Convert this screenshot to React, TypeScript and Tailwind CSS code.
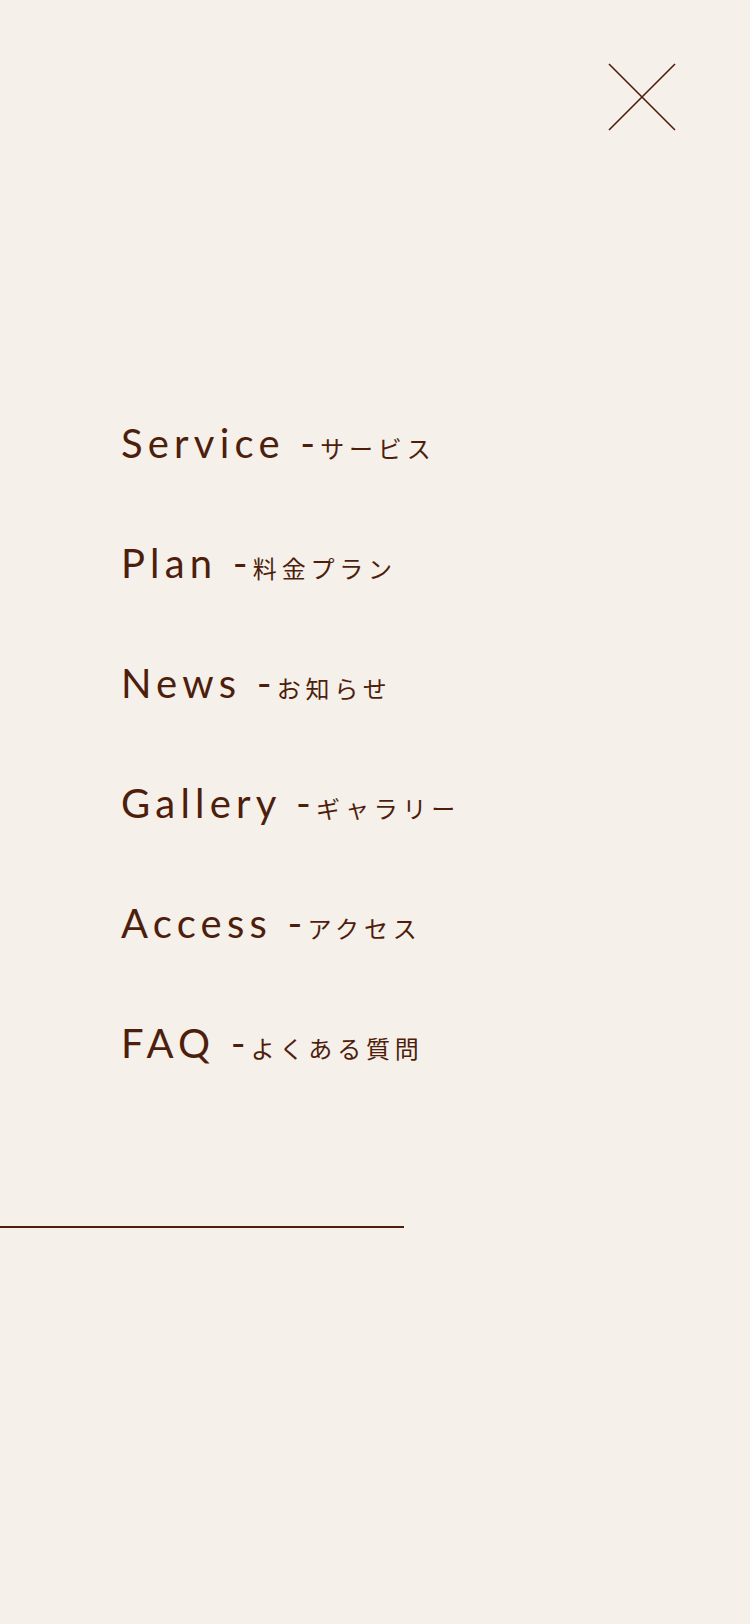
import React from 'react';

const items = [
  { en: 'Service', ja: 'サービス' },
  { en: 'Plan', ja: '料金プラン' },
  { en: 'News', ja: 'お知らせ' },
  { en: 'Gallery', ja: 'ギャラリー' },
  { en: 'Access', ja: 'アクセス' },
  { en: 'FAQ', ja: 'よくある質問' },
];

export default function App() {
  return (
    <div className="min-h-[1624px] w-full bg-[#f5f0ea] text-[#4e1e0c]">
      {/* Close button */}
      <div className="flex justify-end pt-[63px] pr-[74px]">
        <button type="button" aria-label="close" className="w-[68px] h-[68px]">
          <svg width="68" height="68" viewBox="0 0 68 68" fill="none">
            <path d="M1 1L67 67M67 1L1 67" stroke="#4e1e0c" strokeWidth="1.6" />
          </svg>
        </button>
      </div>

      {/* Menu */}
      <ul className="mt-[292px] pl-[121px] flex flex-col">
        {items.map((item) => (
          <li key={item.en} className="h-[120px] flex items-baseline">
            <a href="#" className="flex items-baseline leading-none">
              <span className="font-['Lato',sans-serif] text-[40px] tracking-[0.13em]">
                {item.en} -
              </span>
              <span className="font-['Noto_Sans_CJK_JP',sans-serif] text-[24px] tracking-[0.2em]">
                {item.ja}
              </span>
            </a>
          </li>
        ))}
      </ul>

      <div className="mt-[83px] w-[404px] h-[2px] bg-[#4e1e0c]" />
    </div>
  );
}
